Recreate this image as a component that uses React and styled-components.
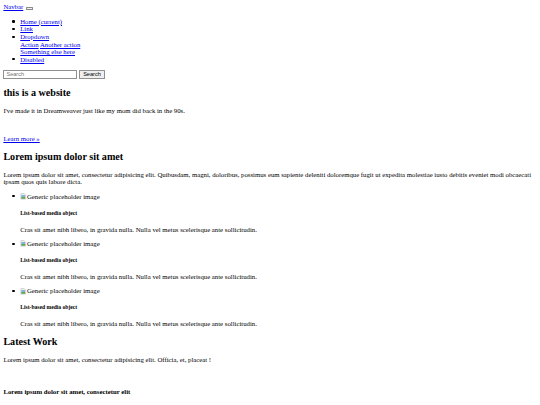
import React from 'react';
import styled, { createGlobalStyle } from 'styled-components';

const Global = createGlobalStyle`
  html { font-size: 6.75px; }
  body {
    margin: 0.5rem;
    font-family: "Liberation Serif", "Times New Roman", serif;
    font-size: 1rem;
    line-height: 1.125;
    color: #000;
    background: #fff;
  }
`;

const Link = styled.a`
  color: #0000ee;
  text-decoration: underline;
  cursor: pointer;
`;

const Nav = styled.nav`
  display: block;
`;

const Toggler = styled.button`
  display: inline-block;
  vertical-align: baseline;
  width: 0.98rem;
  height: 0.45rem;
  margin: 0 0 -0.1rem 0.22rem;
  padding: 0;
  border: 0.42px solid #8a8a8a;
  border-radius: 0.6px;
  background: #efefef;
`;

const BulletList = styled.ul`
  margin: 1em 0;
  padding-left: 2.5em;
  list-style: none;
`;

const Item = styled.li`
  display: block;
  &::before {
    content: "";
    display: inline-block;
    width: 2.1px;
    height: 2.1px;
    border-radius: 50%;
    background: #000;
    margin-left: -7.8px;
    margin-right: 5.7px;
    vertical-align: 0.18em;
  }
`;

const DropMenu = styled.div`
  display: block;
`;

const Divider = styled.div`
  height: 0;
`;

const SearchForm = styled.form`
  display: flex;
  align-items: center;
  gap: 0.42rem;
  height: 1.32rem;
`;

const SearchInput = styled.input`
  box-sizing: border-box;
  width: 10.85rem;
  height: 1.3rem;
  margin: 0;
  padding: 0 0.3rem;
  border: 0.5px solid #8f8f8f;
  border-radius: 0.6px;
  font-family: "Liberation Sans", Arial, sans-serif;
  font-size: 5.625px;
  color: #000;
  background: #fff;
  &::placeholder { color: #757575; }
`;

const SearchButton = styled.button`
  box-sizing: border-box;
  height: 1.3rem;
  margin: 0;
  padding: 0 0.4rem;
  border: 0.5px solid #8f8f8f;
  border-radius: 0.6px;
  background: #efefef;
  font-family: "Liberation Sans", Arial, sans-serif;
  font-size: 5.625px;
  color: #000;
`;

const Main = styled.main`
  display: block;
`;

const Heading = styled.h2`
  font-size: 1.5em;
  font-weight: bold;
  margin: 0.83em 0;
`;

const Paragraph = styled.p`
  margin: ${p => p.$top || '1em'} 0 1em;
`;

const MediaTitle = styled.h5`
  font-size: 0.83em;
  line-height: 1.2;
  font-weight: bold;
  margin: 1.67em 0;
`;

const SubTitle = styled.h4`
  font-size: 1em;
  font-weight: bold;
  margin: ${p => p.$top || '1.33em'} 0 1.33em;
`;

const BrokenImage = styled.span`
  display: inline-flex;
  align-items: baseline;
  color: #000;
  svg {
    width: 1rem;
    height: 1rem;
    align-self: center;
    flex: none;
  }
`;

const BrokenIcon = () => (
  <svg viewBox="0 0 16 16" aria-hidden="true">
    <path d="M2 1.5h8l3.5 3.5v9.5H2z" fill="#f4f4f4" stroke="#9a9a9a" strokeWidth="1" />
    <path d="M3 5h9v4.5l-2 -1.5 -2 2 -2 -1.5 -3 2z" fill="#7fb3e6" />
    <path d="M3 13.5v-3l3 -2 2 1.5 2 -2 2 1.5v4z" fill="#5aa24a" />
  </svg>
);

const media = [1, 2, 3];

export default function App() {
  return (
    <>
      <Global />
      <Nav>
        <Link href="#">Navbar</Link> <Toggler type="button" aria-label="Toggle navigation" />
        <BulletList>
          <Item><Link href="#">Home (current)</Link></Item>
          <Item><Link href="#">Link</Link></Item>
          <Item>
            <Link href="#">Dropdown</Link>
            <DropMenu>
              <Link href="#">Action</Link> <Link href="#">Another action</Link>
              <Divider />
              <Link href="#">Something else here</Link>
            </DropMenu>
          </Item>
          <Item><Link href="#">Disabled</Link></Item>
        </BulletList>
        <SearchForm onSubmit={e => e.preventDefault()}>
          <SearchInput type="search" placeholder="Search" aria-label="Search" />
          <SearchButton type="submit">Search</SearchButton>
        </SearchForm>
      </Nav>
      <Main>
        <Heading>this is a website</Heading>
        <Paragraph>I've made it in Dreamweaver just like my mom did back in the 90s.</Paragraph>
        <Paragraph $top="3em"><Link href="#">Learn more »</Link></Paragraph>

        <Heading>Lorem ipsum dolor sit amet</Heading>
        <Paragraph>
          Lorem ipsum dolor sit amet, consectetur adipisicing elit. Quibusdam, magni, doloribus, possimus eum sapiente deleniti doloremque fugit ut expedita molestiae iusto debitis eveniet modi obcaecati ipsam quos quis labore dicta.
        </Paragraph>
        <BulletList>
          {media.map(n => (
            <Item key={n}>
              <BrokenImage><BrokenIcon />Generic placeholder image</BrokenImage>
              <MediaTitle>List-based media object</MediaTitle>
              <Paragraph>Cras sit amet nibh libero, in gravida nulla. Nulla vel metus scelerisque ante sollicitudin.</Paragraph>
            </Item>
          ))}
        </BulletList>

        <Heading>Latest Work</Heading>
        <Paragraph>Lorem ipsum dolor sit amet, consectetur adipisicing elit. Officia, et, placeat !</Paragraph>
        <SubTitle $top="3.6em">Lorem ipsum dolor sit amet, consectetur elit</SubTitle>
      </Main>
    </>
  );
}
